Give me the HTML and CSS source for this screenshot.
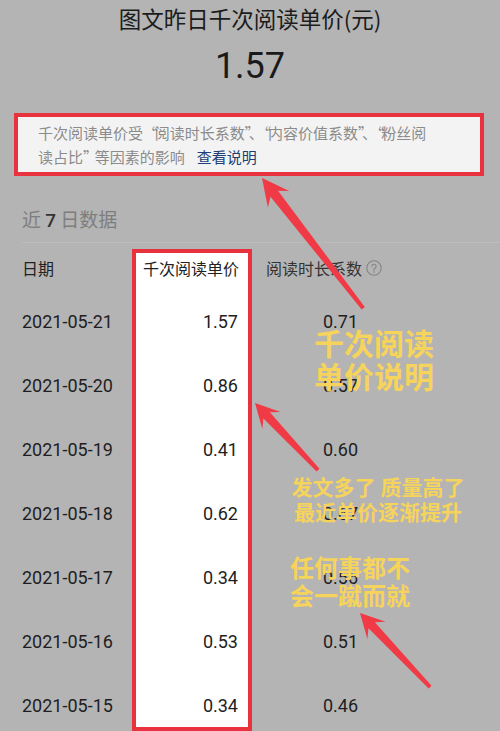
FILE: index.html
```html
<!DOCTYPE html>
<html lang="zh-CN">
<head>
<meta charset="utf-8">
<title>千次阅读单价</title>
<link rel="stylesheet" href="styles.css">
</head>
<body>
<div class="page">
  <h1 class="title">图文昨日千次阅读单价(元)</h1>
  <div class="big-value">1.57</div>

  <div class="info-box">
    千次阅读单价受<span class="q">“</span>阅读时长系数<span class="q">”</span>、<span class="q">“</span>内容价值系数<span class="q">”</span>、<span class="q">“</span>粉丝阅<br>读占比<span class="q">”</span>等因素的影响<span class="info-link">查看说明</span>
  </div>

  <div class="section-title">近 <span class="sec-num">7</span> 日数据</div>

  <div class="table">
    <div class="col col-date">
      <div class="th">日期</div>
      <div class="td">2021-05-21</div>
      <div class="td">2021-05-20</div>
      <div class="td">2021-05-19</div>
      <div class="td">2021-05-18</div>
      <div class="td">2021-05-17</div>
      <div class="td">2021-05-16</div>
      <div class="td">2021-05-15</div>
    </div>
    <div class="col col-price">
      <div class="th">千次阅读单价</div>
      <div class="td">1.57</div>
      <div class="td">0.86</div>
      <div class="td">0.41</div>
      <div class="td">0.62</div>
      <div class="td">0.34</div>
      <div class="td">0.53</div>
      <div class="td">0.34</div>
    </div>
    <div class="col col-coef">
      <div class="th">阅读时长系数<svg class="help-icon" viewBox="0 0 16 16" width="16" height="16"><circle cx="8" cy="8" r="7.2" fill="none" stroke="#858585" stroke-width="1.1"/><path d="M5.9 6.3a2.1 2.1 0 1 1 3.2 1.8c-0.7 0.4-1.1 0.8-1.1 1.6v0.5" fill="none" stroke="#858585" stroke-width="1.1" stroke-linecap="round"/><circle cx="8" cy="11.9" r="0.75" fill="#858585"/></svg></div>
      <div class="td">0.71</div>
      <div class="td">0.57</div>
      <div class="td">0.60</div>
      <div class="td">0.67</div>
      <div class="td">0.56</div>
      <div class="td">0.51</div>
      <div class="td">0.46</div>
    </div>
  </div>

  <svg class="arrows" viewBox="0 0 500 731" width="500" height="731">
    <polygon transform="translate(262 178) rotate(-127.84)" points="-165,-2 -20,-4.8 -27,-13.5 0,0 -27,13.5 -20,4.8 -165,2" />
    <polygon transform="translate(255 403) rotate(-133.24)" points="-92,-2 -17,-4.4 -24,-12.5 0,0 -24,12.5 -17,4.4 -92,2" />
    <polygon transform="translate(360 613) rotate(-133.4)" points="-102,-2 -17,-4.4 -24,-12.5 0,0 -24,12.5 -17,4.4 -102,2" />
  </svg>

  <div class="note note-1">千次阅读<br>单价说明</div>
  <div class="note note-2">发文多了 质量高了<br>最近单价逐渐提升</div>
  <div class="note note-3">任何事都不<br>会一蹴而就</div>
</div>
</body>
</html>
```
FILE: styles.css
```css
html, body {
  margin: 0;
  padding: 0;
  background: #b4b4b4;
}

body {
  font-family: Roboto, "Noto Sans CJK SC", sans-serif;
  color: #1e1e1e;
}

.page {
  position: relative;
  width: 500px;
  height: 731px;
  overflow: hidden;
}

.title {
  margin: 4px 0 0;
  font-size: 22.5px;
  font-weight: 400;
  line-height: 28px;
  text-align: center;
  color: #1c1c1c;
  font-family: "Noto Sans CJK SC", sans-serif;
}

.big-value {
  margin-top: 12px;
  font-size: 36px;
  line-height: 44px;
  text-align: center;
  color: #1a1a1a;
}

.info-box {
  margin: 25px 16px 0 14px;
  border: 4px solid #e8323e;
  background: #f3f3f3;
  padding: 4px 10px 3px 20px;
  font-size: 15px;
  line-height: 24px;
  color: #8b8b8b;
  font-family: "Noto Sans CJK SC", sans-serif;
}

.q {
  letter-spacing: -3.4px;
}

.info-link {
  margin-left: 12px;
  color: #213d73;
}

.section-title {
  margin: 30px 0 0 22px;
  padding-bottom: 8px;
  border-bottom: 1px solid #bcbcbc;
  font-size: 19px;
  line-height: 26px;
  color: #7e7e7e;
  font-family: "Noto Sans CJK SC", sans-serif;
}

.sec-num {
  font-family: Roboto, sans-serif;
  font-weight: 500;
  color: #333;
}

.table {
  display: flex;
  margin-top: 6px;
  height: 482px;
}

.col {
  display: flex;
  flex-direction: column;
  height: 482px;
  overflow: hidden;
}

.th {
  flex: none;
  height: 41px;
  line-height: 38px;
  font-size: 16px;
  font-family: "Noto Sans CJK SC", sans-serif;
  color: #222;
}

.td {
  flex: none;
  height: 64px;
  line-height: 64px;
  font-size: 18px;
  color: #1e1e1e;
}

.col-date {
  width: 110px;
  padding-left: 22px;
}

.col-price {
  width: 120px;
  box-sizing: border-box;
  border: 4px solid #e8323e;
  background: #ffffff;
}

.col-price .th {
  height: 37px;
  line-height: 30px;
  padding-left: 7px;
}

.col-price .td {
  text-align: right;
  padding-right: 10px;
}

.col-coef {
  flex: 1;
}

.col-coef .th {
  display: flex;
  align-items: center;
  height: 38px;
  padding-bottom: 3px;
  padding-left: 14px;
  color: #333;
}

.help-icon {
  margin-left: 4px;
}

.col-coef .td {
  padding-left: 71px;
}

.arrows {
  position: absolute;
  left: 0;
  top: 0;
  pointer-events: none;
}

.arrows polygon {
  fill: #f03a46;
}

.note {
  position: absolute;
  font-family: "Noto Sans CJK SC", sans-serif;
  font-weight: 700;
  color: #f6d35b;
  white-space: nowrap;
}

.note-1 {
  left: 314px;
  top: 326px;
  font-size: 30px;
  line-height: 33px;
}

.note-2 {
  left: 278px;
  width: 200px;
  top: 474px;
  font-size: 21px;
  line-height: 25px;
  text-align: center;
}

.note-3 {
  left: 290px;
  top: 553px;
  font-size: 24px;
  line-height: 28px;
}
```
